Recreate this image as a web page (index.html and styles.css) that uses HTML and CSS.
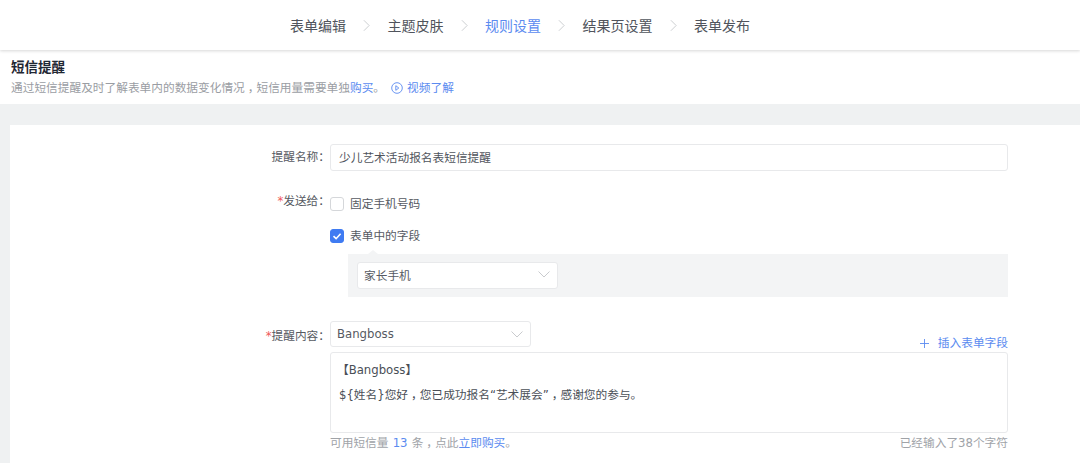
FILE: index.html
```html
<!DOCTYPE html>
<html lang="zh">
<head>
<meta charset="utf-8">
<title>短信提醒</title>
<link rel="stylesheet" href="styles.css">
</head>
<body>
<header class="steps">
  <span class="step">表单编辑</span>
  <svg class="sep" viewBox="0 0 8 14"><path d="M1 1l6 6-6 6"/></svg>
  <span class="step">主题皮肤</span>
  <svg class="sep" viewBox="0 0 8 14"><path d="M1 1l6 6-6 6"/></svg>
  <span class="step active">规则设置</span>
  <svg class="sep" viewBox="0 0 8 14"><path d="M1 1l6 6-6 6"/></svg>
  <span class="step">结果页设置</span>
  <svg class="sep" viewBox="0 0 8 14"><path d="M1 1l6 6-6 6"/></svg>
  <span class="step">表单发布</span>
</header>
<section class="intro">
  <h1 class="title">短信提醒</h1>
  <p class="desc">通过短信提醒及时了解表单内的数据变化情况<span class="comma">，</span>短信用量需要单独<a class="link">购买</a>。<svg class="play" viewBox="0 0 12 12"><circle cx="6" cy="6" r="5.3"/><path d="M4.800 3.700l3 2.300-3 2.300z"/></svg><a class="link">视频了解</a></p>
</section>
<main class="page">
  <div class="card">
    <div class="row name-row">
      <label class="label">提醒名称：</label>
      <div class="control"><div class="input">少儿艺术活动报名表短信提醒</div></div>
    </div>
    <div class="row send-row">
      <label class="label send-label"><i class="req">*</i>发送给：</label>
      <div class="control">
        <div class="check"><span class="box"></span>固定手机号码</div>
        <div class="check second"><span class="box on"><svg viewBox="0 0 14 14"><path d="M3.500 7.200l2.600 2.500 4.500-5"/></svg></span>表单中的字段</div>
        <div class="panel">
          <div class="select small">家长手机<svg class="caret" viewBox="0 0 12 7"><path d="M.5.5L6 6l5.500-5.500"/></svg></div>
        </div>
      </div>
    </div>
    <div class="row content-row">
      <label class="label content-label"><i class="req">*</i>提醒内容：</label>
      <div class="control">
        <div class="content-top">
          <div class="select sign">Bangboss<svg class="caret" viewBox="0 0 12 7"><path d="M.5.5L6 6l5.500-5.500"/></svg></div>
          <a class="insert"><svg class="plus" viewBox="0 0 10 10"><path d="M5 0v10M0 5h10"/></svg>插入表单字段</a>
        </div>
        <div class="textarea">
          <p class="sign-line">【Bangboss】</p>
          <p class="msg">${姓名}您好<span class="comma">，</span>您已成功报名“艺术展会”<span class="comma">，</span>感谢您的参与。</p>
        </div>
        <div class="foot">
          <span>可用短信量 <b class="num">13</b> 条<span class="comma">，</span>点此<a class="link">立即购买</a>。</span>
          <span class="count">已经输入了38个字符</span>
        </div>
      </div>
    </div>
  </div>
</main>
</body>
</html>
```
FILE: styles.css
```css
* { box-sizing: border-box; }
html, body { margin: 0; height: 463px; overflow: hidden; }
body {
  background: #fff;
  color: #4a4f57;
  font-family: "DejaVu Sans", "Noto Sans CJK SC", sans-serif;
  font-size: 11.7px;
}
p, h1 { margin: 0; }
.steps {
  height: 50px;
  display: flex;
  align-items: center;
  padding-left: 290px;
  font-size: 14px;
  color: #50545c;
  box-shadow: 0 1px 3px rgba(0,0,0,.16);
  position: relative;
}
.step.active { color: #5b8bf0; }
.sep { width: 7px; height: 13px; margin: 0 17.500px 0 17px; fill: none; stroke: #c6c8cc; stroke-width: 1; }
.intro { height: 54px; padding: 8px 0 0 11px; }
.title { font-size: 13.500px; line-height: 18px; font-weight: 700; color: #1f2733; }
.desc { margin-top: 4px; line-height: 16px; color: #9a9da3; white-space: nowrap; }
.comma { font-feature-settings: "halt"; padding: 0 .25em; }
.link { color: #5b8bf0; }
.play { width: 12px; height: 12px; margin: 0 4px 0 6px; vertical-align: -2px; fill: none; stroke: #5b8bf0; stroke-width: .9; }
.page { background: #eff1f2; padding: 21px 0 0 10px; height: 359px; }
.card { background: #fff; height: 338px; padding-top: 19px; }
.row { display: flex; }
.label {
  width: 320px; flex: none; text-align: right; line-height: 27px; color: #565a62;
  font-family: "DejaVu Sans", "Noto Sans CJK TC", sans-serif;
}
.req { color: #f05a5a; font-style: normal; }
.control { width: 678px; }
.input {
  height: 27px; line-height: 26px; padding-left: 8px;
  border: 1px solid #e8e9eb; border-radius: 3px; color: #50545c;
}
.send-row { margin-top: 23px; }
.send-label { line-height: 15px; }
.check { display: flex; align-items: flex-start; height: 14px; line-height: 14px; margin-top: 3px; color: #565a62; }
.check.second { margin-top: 18px; }
.box {
  width: 14px; height: 14px; margin-right: 6px;
  border: 1px solid #d5d7da; border-radius: 3px; background: #fff; display: block;
}
.box.on { background: #3f7bf2; border-color: #3f7bf2; }
.box svg { display: block; width: 14px; height: 14px; margin: -1px; fill: none; stroke: #fff; stroke-width: 1.6; }
.panel { margin: 11px 0 0 18px; height: 43px; background: #f3f4f5; padding: 8px 0 0 9px; position: relative; }
.panel::before {
  content: ""; position: absolute; left: 20px; top: -4px;
  border: 5px solid transparent; border-top: 0; border-bottom: 4px solid #f3f4f5;
}
.select {
  display: flex; justify-content: space-between; align-items: center;
  height: 27px; background: #fff; padding: 0 7px 2px 6px;
  border: 1px solid #e8e9eb; border-radius: 3px; color: #565a62;
}
.small { width: 201px; }
.sign { width: 201px; height: 26px; padding-bottom: 0; }
.caret { width: 12px; height: 7px; fill: none; stroke: #c9cbce; stroke-width: 1; }
.content-row { margin-top: 24px; }
.content-label { padding-top: 2px; }
.content-top { display: flex; justify-content: space-between; align-items: flex-end; height: 26px; }
.insert { color: #5b8bf0; display: flex; align-items: center; line-height: 14px; margin-bottom: -3px; }
.plus { width: 9px; height: 9px; margin-right: 9px; fill: none; stroke: #5b8bf0; stroke-width: 1; }
.textarea {
  margin-top: 5px; height: 81px; padding: 9px 8px 0 6px;
  border: 1px solid #e8e9eb; border-radius: 3px; color: #4a4f57;
}
.sign-line { line-height: 16px; }
.msg { margin-top: 9px; line-height: 16px; padding-left: 2px; }
.foot { display: flex; justify-content: space-between; margin-top: 2px; line-height: 16px; color: #a0a3a8; }
.num { font-weight: 400; color: #5b8bf0; margin: 0 .5px; }
```
